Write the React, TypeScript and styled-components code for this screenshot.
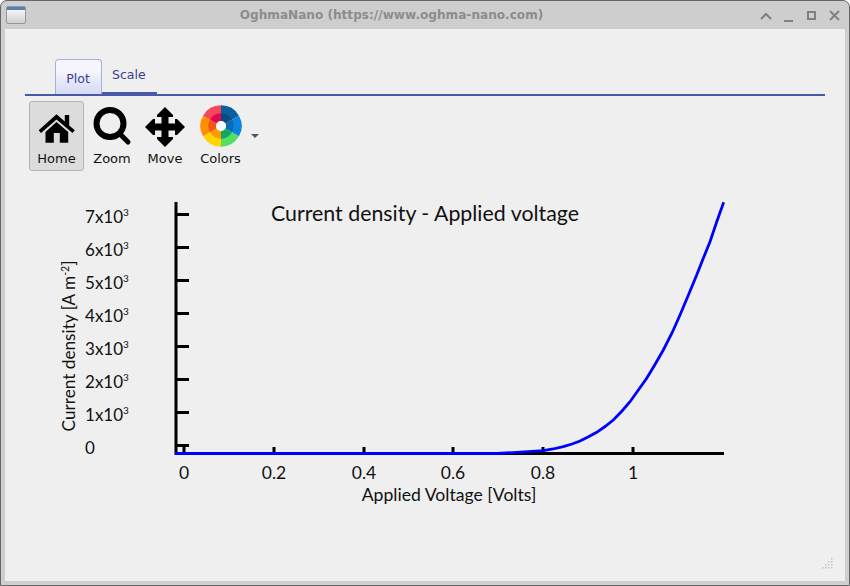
import React from "react";
import styled, { createGlobalStyle } from "styled-components";

const GlobalStyle = createGlobalStyle`
  html, body {
    margin: 0;
    padding: 0;
    background: #ffffff;
  }
`;

const Window = styled.div`
  width: 850px;
  height: 586px;
  box-sizing: border-box;
  display: flex;
  flex-direction: column;
  background: #cecece;
  border: 1px solid #666666;
  border-radius: 7px 7px 0 0;
  font-family: "DejaVu Sans", sans-serif;
  overflow: hidden;
`;

const TitleBar = styled.div`
  height: 28px;
  flex: none;
  position: relative;
  display: flex;
  align-items: center;
  justify-content: center;
  padding-right: 67px;
`;

const WindowIcon = styled.div`
  position: absolute;
  left: 5px;
  top: 5px;
  width: 20px;
  height: 18px;
  box-sizing: border-box;
  border: 1px solid #969696;
  border-radius: 2px;
  background: linear-gradient(#5b7db8 0 3px, #f6f6f6 3px, #cfcfcf 100%);
`;

const Title = styled.span`
  font-size: 12.1px;
  font-weight: bold;
  color: #8c8c8c;
`;

const Controls = styled.div`
  position: absolute;
  right: 7px;
  top: 8px;
  display: flex;
  gap: 9px;
`;

const Body = styled.div`
  flex: 1;
  margin: 0 4px 4px;
  background: #efefef;
  display: flex;
  flex-direction: column;
`;

const TabBar = styled.div`
  height: 67px;
  flex: none;
  margin: 0 20px;
  padding: 0 0 0 30px;
  box-sizing: border-box;
  display: flex;
  align-items: flex-end;
  border-bottom: 2px solid #4a58a8;
`;

const Tab = styled.div<{ $active?: boolean }>`
  box-sizing: border-box;
  height: 35px;
  font-size: 12.5px;
  color: #3a3f8c;
  ${(p) =>
    p.$active
      ? `
    width: 47px;
    padding: 11px 1px 0 0;
    text-align: center;
    border: 1px solid #a9b0d6;
    border-bottom: none;
    border-radius: 4px 4px 0 0;
    background: linear-gradient(#f6f6fe 30%, #d5d9f5);
  `
      : `
    width: 55px;
    padding: 8px 0 0 10px;
    border-bottom: 2px solid #4a58a8;
  `}
`;

const Toolbar = styled.div`
  flex: none;
  margin: 5px 0 0 24px;
  display: flex;
  align-items: flex-start;
`;

const ToolButton = styled.div<{ $pressed?: boolean; $width: number }>`
  width: ${(p) => p.$width}px;
  height: 70px;
  box-sizing: border-box;
  display: flex;
  flex-direction: column;
  align-items: center;
  justify-content: flex-end;
  padding-bottom: ${(p) => (p.$pressed ? 4 : 5)}px;
  font-size: 13px;
  line-height: 15px;
  color: #111;
  border-radius: 3px;
  ${(p) =>
    p.$pressed &&
    `
    background: #dcdcdc;
    border: 1px solid #b4b4b4;
  `}
`;

const ToolIcon = styled.svg`
  display: block;
  margin-bottom: 3px;
`;

const DropArrow = styled.div`
  width: 0;
  height: 0;
  margin: 33px 0 0 0;
  border-left: 4px solid transparent;
  border-right: 4px solid transparent;
  border-top: 4px solid #555;
`;

const ChartWrap = styled.div`
  flex: none;
  margin: 24px 0 0 0;
  height: 320px;
`;

const Chart = styled.svg`
  display: block;
  font-family: Lato, sans-serif;
  fill: #111;
`;

const Footer = styled.div`
  flex: 1;
  display: flex;
  justify-content: flex-end;
  align-items: flex-end;
  padding: 0 11px 12px 0;
`;

const yTicks = [
  { y: 214.5, n: 7 },
  { y: 247.5, n: 6 },
  { y: 280.5, n: 5 },
  { y: 313.5, n: 4 },
  { y: 346.5, n: 3 },
  { y: 379.5, n: 2 },
  { y: 412.5, n: 1 },
];

const xTicks = [
  { x: 184, t: "0" },
  { x: 274, t: "0.2" },
  { x: 364, t: "0.4" },
  { x: 453, t: "0.6" },
  { x: 543, t: "0.8" },
  { x: 633, t: "1" },
];

// hand read off the reference, page coordinates
const curve =
  "175,453.5 497,453.5 513,452.6 543.3,450.6 553,449 563.3,446.7 572,444 580,441 588,437 596.7,432.3 605,426.5 613.3,420 622,411 630,401.7 638,390.5 646.7,378.3 655,364.5 663.3,350 672,333 680,315 688,296 696.7,275 703,259 710,241.7 717,221 723.7,202.3";

// chart svg starts at page y 195
const CHART_TOP = 195;

function sector(r0: number, r1: number, a0: number, a1: number) {
  const p = (r: number, a: number) => {
    const t = ((a - 90) * Math.PI) / 180;
    return `${(22 + r * Math.cos(t)).toFixed(2)} ${(22 + r * Math.sin(t)).toFixed(2)}`;
  };
  return `M${p(r0, a0)} L${p(r1, a0)} A${r1} ${r1} 0 0 1 ${p(r1, a1)} L${p(r0, a1)} A${r0} ${r0} 0 0 0 ${p(r0, a0)} Z`;
}

const outerColors = ["#0a5f9e", "#0a84e0", "#55dd66", "#ffd400", "#ff8f00", "#f4475a"];
const innerColors = ["#0b4a80", "#0a6cb5", "#0fa860", "#ff9d00", "#f5560f", "#e3064f"];

function Wheel() {
  return (
    <ToolIcon width="44" height="44" viewBox="0 0 44 44">
      {outerColors.map((c, i) => (
        <path key={c} d={sector(12, 20.7, i * 60, i * 60 + 60)} fill={c} />
      ))}
      {innerColors.map((c, i) => (
        <path key={c} d={sector(5, 12.7, i * 60, i * 60 + 60)} fill={c} />
      ))}
      <circle cx="22" cy="22" r="5" fill="#fff" />
    </ToolIcon>
  );
}

export default function App() {
  return (
    <>
      <GlobalStyle />
      <Window>
        <TitleBar>
          <WindowIcon />
          <Title>OghmaNano (https://www.oghma-nano.com)</Title>
          <Controls>
            <svg width="14" height="14" viewBox="0 0 14 14" fill="none" stroke="#808080" strokeWidth="2">
              <path d="M2 10 L7 5 L12 10" />
            </svg>
            <svg width="14" height="14" viewBox="0 0 14 14" fill="none" stroke="#808080" strokeWidth="2">
              <path d="M2 12 H11" />
            </svg>
            <svg width="14" height="14" viewBox="0 0 14 14" fill="none" stroke="#808080" strokeWidth="2">
              <rect x="3" y="3" width="7" height="7" />
            </svg>
            <svg width="14" height="14" viewBox="0 0 14 14" fill="none" stroke="#808080" strokeWidth="2">
              <path d="M2 2 L11 11 M11 2 L2 11" />
            </svg>
          </Controls>
        </TitleBar>
        <Body>
          <TabBar>
            <Tab $active>Plot</Tab>
            <Tab>Scale</Tab>
          </TabBar>
          <Toolbar>
            <ToolButton $pressed $width={55}>
              <ToolIcon width="38" height="36" viewBox="0 0 38 36">
                <path
                  d="M18.5 2.3 L26.8 9.5 V3 H31.2 V13.5 L36.8 18.2 L34.5 21 L18.5 7.5 L3 21 L0.7 18.2 Z"
                  fill="#000"
                />
                <path d="M18.5 10 L30.2 20 V30.7 H21.8 V21 H15.8 V30.7 H7.5 V20 Z" fill="#000" />
              </ToolIcon>
              Home
            </ToolButton>
            <ToolButton $width={56}>
              <ToolIcon width="40" height="42" viewBox="0 0 40 42" fill="none" stroke="#000">
                <circle cx="18" cy="17.5" r="13.5" strokeWidth="6" />
                <path d="M27 27 L36 36" strokeWidth="5" strokeLinecap="round" />
              </ToolIcon>
              Zoom
            </ToolButton>
            <ToolButton $width={50}>
              <ToolIcon width="42" height="42" viewBox="0 0 42 42">
                <path
                  d="M21 1 L29 9 V11 H24.5 V17.5 H31 V13 H33 L41 21 L33 29 H31 V24.5 H24.5 V31 H29 V33 L21 41 L13 33 V31 H17.5 V24.5 H11 V29 H9 L1 21 L9 13 H11 V17.5 H17.5 V11 H13 V9 Z"
                  fill="#000"
                />
              </ToolIcon>
              Move
            </ToolButton>
            <ToolButton $width={61}>
              <Wheel />
              Colors
            </ToolButton>
            <DropArrow />
          </Toolbar>
          <ChartWrap>
            <Chart width="842" height="320" viewBox={`5 ${CHART_TOP} 842 320`}>
              <text x="425" y="221" fontSize="21.35" textAnchor="middle">
                Current density - Applied voltage
              </text>
              <rect x="174.5" y="202" width="3" height="253" fill="#000" />
              <rect x="175" y="452" width="549" height="3" fill="#000" />
              {yTicks.map((t) => (
                <g key={t.n}>
                  <rect x="176" y={t.y - 1.5} width="13" height="3" fill="#000" />
                  <text x="85" y={t.y + 8} fontSize="17">
                    {t.n}x10
                    <tspan fontSize="10" dy="-7">
                      3
                    </tspan>
                  </text>
                </g>
              ))}
              <rect x="176" y="444" width="13" height="3" fill="#000" />
              <text x="85" y="454" fontSize="17">
                0
              </text>
              {xTicks.map((t) => (
                <g key={t.t}>
                  <rect x={t.x - 1.5} y="447" width="3" height="6" fill="#000" />
                  <text x={t.x} y="479" fontSize="17.5" textAnchor="middle">
                    {t.t}
                  </text>
                </g>
              ))}
              <text x="449" y="501" fontSize="17.6" textAnchor="middle">
                Applied Voltage [Volts]
              </text>
              <text transform="translate(75 346) rotate(-90)" fontSize="17.2" textAnchor="middle">
                Current density [A m
                <tspan fontSize="10.5" dy="-6">
                  -2
                </tspan>
                <tspan dy="6">]</tspan>
              </text>
              <polyline points={curve} fill="none" stroke="#0000ff" strokeWidth="2.8" />
            </Chart>
          </ChartWrap>
          <Footer>
            <svg width="12" height="12" viewBox="0 0 12 12" fill="#c4c4c4">
              <rect x="9" y="1" width="1.5" height="1.5" />
              <rect x="6" y="4" width="1.5" height="1.5" />
              <rect x="9" y="4" width="1.5" height="1.5" />
              <rect x="3" y="7" width="1.5" height="1.5" />
              <rect x="6" y="7" width="1.5" height="1.5" />
              <rect x="9" y="7" width="1.5" height="1.5" />
              <rect x="0" y="10" width="1.5" height="1.5" />
              <rect x="3" y="10" width="1.5" height="1.5" />
              <rect x="6" y="10" width="1.5" height="1.5" />
              <rect x="9" y="10" width="1.5" height="1.5" />
            </svg>
          </Footer>
        </Body>
      </Window>
    </>
  );
}
